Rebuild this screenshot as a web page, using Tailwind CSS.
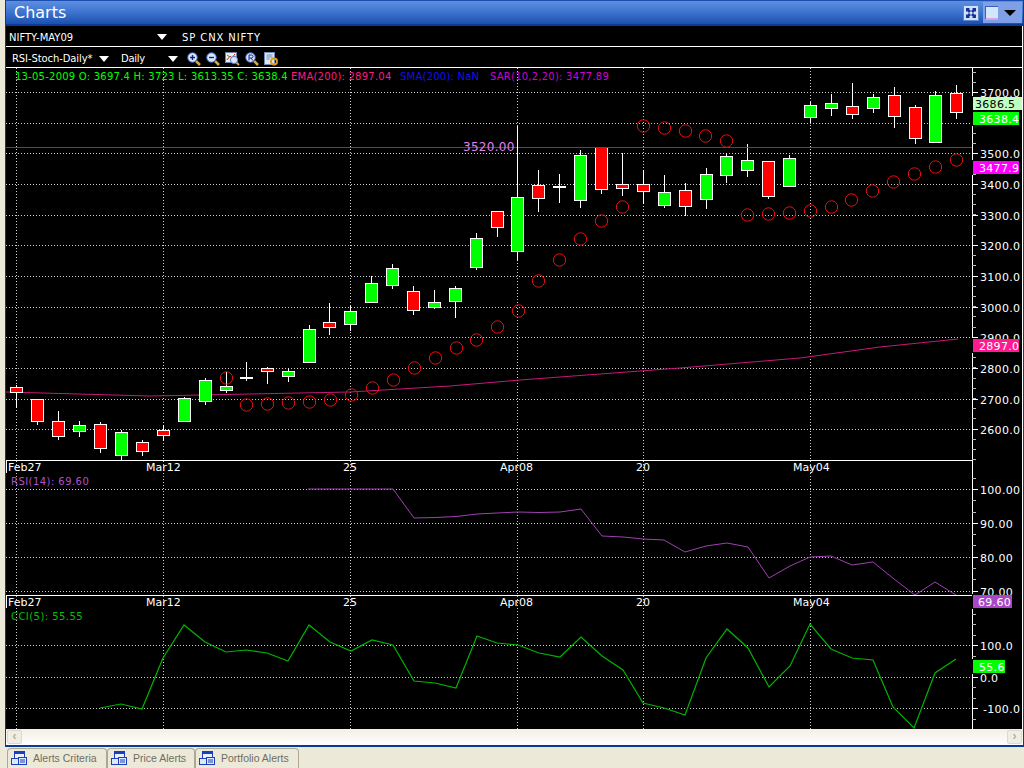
<!DOCTYPE html>
<html lang="en">
<head>
    <meta charset="UTF-8">
    <title>Charts</title>
    <script src="https://cdn.jsdelivr.net/npm/@tailwindcss/browser@4"></script>
</head>
<body class="bg-[#ece9d8] w-[1024px] h-[768px] overflow-hidden flex flex-col font-['Liberation_Sans',sans-serif]">
    <div class="h-[747px] shrink-0 ml-[5px] border-x border-b-2 border-[#0a3a96] flex flex-col">
        <!-- title bar -->
        <div class="h-[26px] shrink-0 flex items-center justify-between pr-[1px] bg-gradient-to-b from-[#5d8fe0] via-[#3d72cf] to-[#1b50ae] border-t border-b-2 border-t-[#1c4fb0] border-b-[#0a3a96]">
            <span class="pl-[8px] pt-[1px] text-white text-[16px] leading-none font-['DejaVu_Sans',sans-serif]">Charts</span>
            <div class="flex items-center gap-[4px]">
                <svg width="16" height="16" viewBox="0 0 16 16">
                    <rect x="0.5" y="0.5" width="15" height="15" fill="#cfe0f8" stroke="#5f86c8"/>
                    <path d="M3 3h4l-1 1 2 2-2 2-2-2-1 1zM13 3v4l-1-1-2 2-2-2 2-2-1-1zM3 13v-4l1 1 2-2 2 2-2 2 1 1zM13 13h-4l1-1-2-2 2-2 2 2 1-1z" fill="#14329a"/>
                </svg>
                <div class="w-[39px] h-[21px] bg-[#7f9fe6] flex items-center gap-[6px] pl-[2px]">
                    <div class="w-[13px] h-[14px] bg-[#cfe8fb] border-t border-l border-t-[#3a5fc0] border-l-[#3a5fc0] border-b-2 border-b-[#e0a0e0]"></div>
                    <div class="w-0 h-0 border-x-[6px] border-x-transparent border-t-[6px] border-t-black"></div>
                </div>
            </div>
        </div>

        <!-- contract row -->
        <div class="h-[21px] shrink-0 pt-[2px] bg-black border-b border-r border-white flex items-center text-white text-[10px] font-['DejaVu_Sans',sans-serif]">
            <span class="w-[151px] pl-[3px]">NIFTY-MAY09</span>
            <div class="w-0 h-0 border-x-[5.5px] border-x-transparent border-t-[6px] border-t-white"></div>
            <span class="pl-[15px] tracking-[0.9px]">SP CNX NIFTY</span>
        </div>

        <!-- indicator row -->
        <div class="h-[21px] shrink-0 pt-[3px] bg-black border-b border-r border-white flex items-center text-white text-[10px] font-['DejaVu_Sans',sans-serif]">
            <span class="w-[93px] pl-[6px] whitespace-nowrap tracking-[-0.1px]">RSI-Stoch-Daily*</span>
            <div class="w-0 h-0 border-x-[5.5px] border-x-transparent border-t-[6px] border-t-white"></div>
            <span class="w-[59px] pl-[12px] tracking-[-0.3px]">Daily</span>
            <div class="w-0 h-0 border-x-[5.5px] border-x-transparent border-t-[6px] border-t-white"></div>
            <div class="flex items-center gap-[5px] pl-[9px]">
                <svg width="14" height="14" viewBox="0 0 14 14"><path d="M9 9l4 4" stroke="#d8a840" stroke-width="2.5"/><circle cx="5.5" cy="5.5" r="4.8" fill="#d8e6fa" stroke="#3a5ac0"/><path d="M3 5.500h5M5.500 3v5" stroke="#14247a" stroke-width="1.400"/></svg>
                <svg width="14" height="14" viewBox="0 0 14 14"><path d="M9 9l4 4" stroke="#d8a840" stroke-width="2.5"/><circle cx="5.5" cy="5.5" r="4.8" fill="#d8e6fa" stroke="#3a5ac0"/><path d="M3 5.500h5" stroke="#14247a" stroke-width="1.400"/></svg>
                <svg width="15" height="14" viewBox="0 0 15 14"><rect x="0.5" y="0.5" width="11" height="10" fill="#e8f0e8" stroke="#6a80a8"/><path d="M2 8l3-4 2 2 3-4" stroke="#c03030" fill="none"/><path d="M2 3l3 2" stroke="#30a040"/><path d="M11 10l3 3" stroke="#d8a840" stroke-width="2"/><circle cx="9" cy="8" r="3.6" fill="#d8e6fa" stroke="#5a7ac8"/></svg>
                <svg width="14" height="14" viewBox="0 0 14 14"><path d="M9 9l4 4" stroke="#d8a840" stroke-width="2.5"/><circle cx="5.5" cy="5.5" r="4.8" fill="#d8e6fa" stroke="#3a5ac0"/><path d="M4 8.500V3h2.500a1.400 1.400 0 010 3H4M6 6l1.800 2.500" stroke="#14247a" fill="none"/></svg>
                <svg width="15" height="14" viewBox="0 0 15 14"><rect x="0.5" y="0.5" width="10" height="12" fill="#dce6f4" stroke="#7088b0"/><path d="M2.500 3h6M2.500 5h6M2.500 7h3" stroke="#7088b0"/><circle cx="10" cy="9.500" r="3" fill="none" stroke="#e0a020" stroke-width="2"/><path d="M10 5.500v1.500M10 12v1.500M6 9.500h1.500M12.500 9.500h1.500" stroke="#c88010"/></svg>
            </div>
        </div>

        <!-- chart panels are a free canvas, filled in by the script below -->
        <svg id="chart" width="1017" height="661" viewBox="6 68 1017 661" class="shrink-0 bg-black block font-['DejaVu_Sans',sans-serif]"></svg>

        <!-- horizontal scrollbar -->
        <div class="h-[16px] shrink-0 bg-gradient-to-b from-[#f1efe6] to-white flex items-center justify-between px-[1px]">
            <div class="w-[15px] h-[14px] bg-[#f0eee2] border border-[#dcdad0] rounded-[2px] text-center text-[#b0aea4] text-[12px] leading-[11px] font-bold">‹</div>
            <div class="w-[15px] h-[14px] bg-[#f0eee2] border border-[#dcdad0] rounded-[2px] text-center text-[#b0aea4] text-[12px] leading-[11px] font-bold">›</div>
        </div>
    </div>

    <!-- tabs -->
    <div class="flex h-[20px] mt-[1px] pl-[7px] text-[#6e6e64] text-[10.5px] whitespace-nowrap">
        <div class="w-[100px] border border-b-0 border-[#aca899] rounded-t-[4px] flex items-center gap-[5px] pl-[2px]">
            <svg width="18" height="17" viewBox="0 0 18 17" class="shrink-0"><rect x="4.500" y="1.500" width="10" height="7" fill="#e8f0ff" stroke="#1c3fb8"/><rect x="4" y="1" width="11" height="3" fill="#1c3fb8"/><rect x="1.500" y="8.500" width="7" height="6" fill="#dce8fc" stroke="#1c3fb8"/><rect x="8.500" y="7.500" width="8" height="7" fill="#dce8fc" stroke="#1c3fb8"/><path d="M10 10h5M10 12h5" stroke="#1c3fb8"/></svg>
            <span>Alerts Criteria</span>
        </div>
        <div class="w-[88px] border border-b-0 border-[#aca899] rounded-t-[4px] flex items-center gap-[5px] pl-[2px]">
            <svg width="18" height="17" viewBox="0 0 18 17" class="shrink-0"><rect x="4.500" y="1.500" width="10" height="7" fill="#e8f0ff" stroke="#1c3fb8"/><rect x="4" y="1" width="11" height="3" fill="#1c3fb8"/><rect x="1.500" y="8.500" width="7" height="6" fill="#dce8fc" stroke="#1c3fb8"/><rect x="8.500" y="7.500" width="8" height="7" fill="#dce8fc" stroke="#1c3fb8"/><path d="M10 10h5M10 12h5" stroke="#1c3fb8"/></svg>
            <span>Price Alerts</span>
        </div>
        <div class="w-[104px] border border-b-0 border-[#aca899] rounded-t-[4px] flex items-center gap-[5px] pl-[2px]">
            <svg width="18" height="17" viewBox="0 0 18 17" class="shrink-0"><rect x="4.500" y="1.500" width="10" height="7" fill="#e8f0ff" stroke="#1c3fb8"/><rect x="4" y="1" width="11" height="3" fill="#1c3fb8"/><rect x="1.500" y="8.500" width="7" height="6" fill="#dce8fc" stroke="#1c3fb8"/><rect x="8.500" y="7.500" width="8" height="7" fill="#dce8fc" stroke="#1c3fb8"/><path d="M10 10h5M10 12h5" stroke="#1c3fb8"/></svg>
            <span>Portfolio Alerts</span>
        </div>
    </div>

    <script>
        // x, body top, body bottom, wick top, wick bottom, colour
        const candles = [
            [16, 387, 392, 385, 408, "r"], [37, 399, 421, 399, 425, "r"], [58, 421, 436, 411, 440, "r"],
            [79, 425, 431, 421, 437, "g"], [100, 424, 448, 422, 453, "r"], [121, 432, 455, 430, 460, "g"],
            [142, 442, 451, 440, 456, "r"], [163, 430, 435, 425, 441, "r"], [184, 398, 421, 397, 421, "g"],
            [205, 380, 401, 378, 405, "g"], [226, 386, 390, 372, 393, "g"], [246, 377, 378, 362, 381, "w"],
            [267, 368, 371, 367, 384, "r"], [288, 371, 376, 368, 382, "g"], [309, 329, 362, 325, 362, "g"],
            [329, 322, 327, 303, 335, "r"], [350, 311, 324, 306, 331, "g"], [371, 283, 302, 276, 302, "g"],
            [392, 268, 285, 264, 289, "g"], [413, 291, 310, 286, 315, "r"], [434, 302, 307, 290, 309, "g"],
            [455, 288, 301, 286, 318, "g"], [476, 238, 267, 233, 270, "g"], [497, 211, 227, 211, 237, "r"],
            [517, 197, 251, 126, 261, "g"], [538, 185, 198, 170, 212, "r"], [559, 186, 187, 174, 203, "w"],
            [580, 155, 200, 150, 208, "g"], [601, 147, 189, 147, 194, "r"], [622, 184, 188, 153, 196, "r"],
            [643, 184, 191, 170, 204, "r"], [664, 192, 205, 175, 208, "g"], [685, 190, 206, 183, 216, "r"],
            [706, 174, 199, 168, 209, "g"], [726, 156, 175, 153, 183, "g"], [747, 160, 170, 144, 177, "g"],
            [768, 161, 196, 161, 199, "r"], [789, 158, 186, 155, 187, "g"], [810, 105, 117, 102, 123, "g"],
            [831, 103, 108, 94, 116, "g"], [852, 106, 114, 83, 119, "r"], [873, 97, 108, 94, 113, "g"],
            [894, 95, 116, 87, 128, "r"], [915, 107, 138, 105, 144, "r"], [935, 95, 142, 91, 143, "g"],
            [956, 93, 112, 85, 119, "r"]
        ];
        const sar = [[226,378],[246,405],[267,404],[288,403],[309,402],[330,400],[351,395],[372,388],[393,380],[414,368],[435,358],[456,348],[476,340],[497,327],[518,311],[538,281],[559,260],[580,239],[601,221],[622,207],[643,126],[664,128],[685,131],[705,136],[726,141],[747,215],[768,214],[789,213],[810,211],[831,207],[851,200],[872,191],[893,182],[914,174],[935,167],[956,160]];
        const ema = "6,392 150,396 250,394 350,392 450,386 520,380 600,374 680,368 800,358 880,347 958,339";
        const rsi = "308,489 393,489 414,518 435,517.5 456,516.5 477,514 497,513 518,512 539,512.5 560,512 581,509 602,536 623,537 643,539 664,540 685,552 706,546 727,543 748,547 769,578 790,566 810,557 831,556 852,565 873,562 894,579 915,595 935,582 956,595";
        const cci = "100,708 121,704 142,709 163,658 184,625 205,642 226,652 246,650 267,653 288,661 309,625 330,642 351,651 372,640 393,645 414,681 435,683 456,688 477,636 497,643 518,645 539,653 560,657 581,637 602,656 623,670 643,703 664,708 685,715 706,658 727,629 748,648 769,687 790,666 810,624 831,649 852,658 873,660 893,707 914,728 935,673 956,659";
        const gridX = [16, 163, 350, 517, 643, 810];
        const dateLabels = ["Feb27", "Mar12", "25", "Apr08", "20", "May04"];

        let out = "";
        const line = (x1, y1, x2, y2, color, extra = "") =>
            `<line x1="${x1}" y1="${y1}" x2="${x2}" y2="${y2}" stroke="${color}" shape-rendering="crispEdges" ${extra}/>`;
        const text = (x, y, str, color, size = 10, extra = "") =>
            `<text x="${x}" y="${y}" fill="${color}" font-size="${size}" ${extra}>${str}</text>`;
        const dotted = 'stroke-dasharray="1 2"';

        // dotted grid
        for (const x of gridX) {
            out += line(x + 0.5, 68, x + 0.5, 460, "#ccc", dotted);
            out += line(x + 0.5, 461, x + 0.5, 595, "#ccc", dotted);
            out += line(x + 0.5, 596, x + 0.5, 729, "#ccc", dotted);
        }
        const priceY = [[92, "3700.0"], [123, ""], [153, "3500.0"], [184, "3400.0"], [215, "3300.0"], [245, "3200.0"], [276, "3100.0"], [307, "3000.0"], [337, "2900.0"], [368, "2800.0"], [399, "2700.0"], [429, "2600.0"]];
        const rsiY = [[489, "100.00"], [523, "90.00"], [557, "80.00"], [591, "70.00"]];
        const cciY = [[645, "100.0"], [677, "0.0"], [708, "-100.0"]];
        for (const [y] of [...priceY, ...rsiY, ...cciY]) out += line(6, y + 0.5, 972, y + 0.5, "#ccc", dotted);

        // price panel
        out += `<polyline points="${ema}" fill="none" stroke="#c8187a"/>`;
        for (const [x, top, bottom, wickTop, wickBottom, kind] of candles) {
            const fill = kind === "g" ? "#00ff00" : kind === "r" ? "#ff0000" : "#ffffff";
            out += line(x + 0.5, wickTop, x + 0.5, wickBottom, "#fff");
            out += `<rect x="${x - 5.5}" y="${top + 0.5}" width="12" height="${bottom - top}" fill="${fill}" stroke="#fff" shape-rendering="crispEdges"/>`;
        }
        out += line(6, 147.5, 972, 147.5, "#e01010");
        out += line(517.5, 126, 517.5, 190, "#fff");
        out += text(463, 151, "3520.00", "#e080f0", 12, 'letter-spacing="0.3"');
        for (const [x, y] of sar) out += `<circle cx="${x + 0.5}" cy="${y}" r="6.200" fill="none" stroke="#e81010"/>`;

        // indicator lines
        out += `<polyline points="${rsi}" fill="none" stroke="#9f40b0"/>`;
        out += `<polyline points="${cci}" fill="none" stroke="#00b400" stroke-width="1.200"/>`;

        // panel separators and axis
        out += line(6, 460.5, 972, 460.5, "#fff") + line(6, 595.5, 972, 595.5, "#fff");
        out += line(6.5, 461, 6.5, 473, "#fff") + line(6.5, 596, 6.5, 608, "#fff");
        out += line(972.5, 68, 972.5, 729, "#fff");
        out += line(1022.5, 68, 1022.5, 729, "#fff");
        for (let y = 71.6; y < 460; y += 10.2) out += line(972, Math.round(y) + 0.5, 976, Math.round(y) + 0.5, "#bbb");
        for (let y = 477.7; y < 595; y += 11.3) out += line(972, Math.round(y) + 0.5, 976, Math.round(y) + 0.5, "#bbb");
        for (let y = 613.5; y < 729; y += 10.5) out += line(972, Math.round(y) + 0.5, 976, Math.round(y) + 0.5, "#bbb");
        for (const [y, label] of [...priceY, ...rsiY, ...cciY]) {
            out += line(972, y + 0.5, 978, y + 0.5, "#fff");
            out += text(label[0] === "-" ? 983 : 980, y + 4.5, label, "#fff", 11, 'letter-spacing="0.3"');
        }

        // date labels
        gridX.forEach((x, i) => {
            const lx = x === 16 ? 8 : i === 2 || i === 4 ? x - 7 : x - 17;
            out += text(lx, 471, dateLabels[i], "#fff", 11);
            out += text(lx, 606, dateLabels[i], "#fff", 11);
        });

        // legends
        const spaced = 'letter-spacing="0.23"';
        out += text(15, 80, "13-05-2009 O: 3697.4 H: 3723 L: 3613.35 C: 3638.4", "#00ff00", 10, spaced);
        out += text(291, 80, "EMA(200): 2897.04", "#ff1a80", 10, spaced);
        out += text(400, 80, "SMA(200): NaN", "#1010f0", 10, spaced);
        out += text(490, 80, "SAR(10,2,20): 3477.89", "#d000d0", 10, spaced);
        out += text(11, 485, "RSI(14): 69.60", "#b050c8", 10, 'letter-spacing="0.45"');
        out += text(11, 620, "CCI(5): 55.55", "#00c000", 10, 'letter-spacing="0.45"');

        // value tags on the axis; the axis line stops around each tag
        const tags = [
            [97, 49, "#bfffbf", "#000", "3686.5", 975], [112, 46, "#00ff00", "#fff", "3638.4", 979],
            [161, 46, "#ff00ff", "#fff", "3477.9", 979], [339, 46, "#ff1a90", "#fff", "2897.0", 979],
            [595, 39, "#a848c8", "#fff", "69.60", 978], [660, 32, "#00ff00", "#fff", "55.6", 979]
        ];
        for (const [y, w, bg, color, label, tx] of tags) {
            out += `<rect x="972" y="${y - 1}" width="1" height="15" fill="#000"/>`;
            out += `<rect x="973" y="${y}" width="${w}" height="13" fill="${bg}"/>`;
            out += text(tx, y + 10.5, label, color, 11, 'letter-spacing="0.3"');
        }

        document.getElementById("chart").innerHTML = out;
    </script>
</body>
</html>
